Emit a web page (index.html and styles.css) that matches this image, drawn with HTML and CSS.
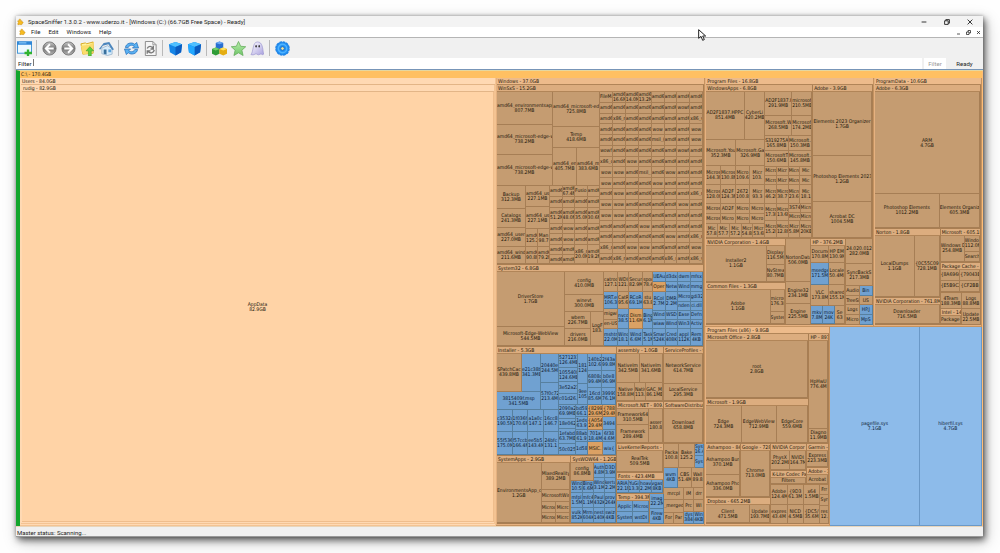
FILE: index.html
```html
<!DOCTYPE html>
<html lang="en">
<head>
<meta charset="utf-8">
<title>SpaceSniffer</title>
<link rel="stylesheet" href="styles.css">
</head>
<body>
<svg class="defs" aria-hidden="true">
  <defs>
    <linearGradient id="grey" x1="0" y1="0" x2="0" y2="1"><stop offset="0" stop-color="#c9c9c9"/><stop offset=".5" stop-color="#777"/><stop offset="1" stop-color="#b5b5b5"/></linearGradient>
    <linearGradient id="green" x1="0" y1="0" x2="0" y2="1"><stop offset="0" stop-color="#b9efac"/><stop offset="1" stop-color="#6fc468"/></linearGradient>
    <linearGradient id="ghost" x1="0" y1="0" x2="1" y2="1"><stop offset="0" stop-color="#fff"/><stop offset="1" stop-color="#aaa2df"/></linearGradient>
    <g id="puzzle"><path d="M2 5h3c-1-2 0-4 1.500-4s2.500 2 1.500 4h3v3c2-1 3 0 3 1.500S12 12 11 11v3H7.500c.500-2-2.500-2-2 0H2v-3.500c2 0 2-2.500 0-2.500z" fill="#f8bd20" stroke="#c98a12"/></g>
    <g id="box"><path d="M1 3.500 8 1l7 2.500-1 8.500-6 3.500L2 12z" fill="#1585e6"/><path d="M1 3.500 8 1l7 2.500L8 6.500z" fill="#4fc0ff"/><path d="M8 6.500 15 3.500 14 12l-6 3.500z" fill="#0a5cc0"/></g>
  </defs>
</svg>
<main class="window">
  <header class="titlebar">
    <svg class="logo" viewBox="0 0 16 16"><use href="#puzzle"/></svg>
    <h1 class="title">SpaceSniffer 1.3.0.2 - www.uderzo.it - [Windows (C:) (66.7GB Free Space) - Ready]</h1>
    <div class="controls">
      <button aria-label="Minimize"><svg viewBox="0 0 10 10"><path d="M1 5h8"/></svg></button>
      <button aria-label="Restore"><svg viewBox="0 0 10 10"><path d="M1 3h6v6H1zM3 3V1h6v6H7"/></svg></button>
      <button aria-label="Close"><svg viewBox="0 0 10 10"><path d="m1 1 8 8M9 1 1 9"/></svg></button>
    </div>
  </header>
  <nav class="menubar">
    <svg class="logo" viewBox="0 0 16 16"><use href="#puzzle"/></svg>
    <button>File</button><button>Edit</button><button>Windows</button><button>Help</button>
    <div class="controls small">
      <button aria-label="Minimize view"><svg viewBox="0 0 10 10"><path d="M2 8h6"/></svg></button>
      <button aria-label="Restore view"><svg viewBox="0 0 10 10"><path d="M1 4h5v5H1zM4 4V1h5v5H6"/></svg></button>
      <button aria-label="Close view"><svg viewBox="0 0 10 10"><path d="m2 2 6 6M8 2 2 8"/></svg></button>
    </div>
  </nav>
  <div class="toolbar">
    <button aria-label="New view"><svg viewBox="0 0 16 16"><rect x=".5" y="1" width="15" height="12" fill="#eefaff" stroke="#3c91d4"/><path d="M0 .5h16v3.500H0z" fill="#2d86d8"/><path d="M2 2h8" stroke="#9ed7ff"/><path d="M10.500 9h2.500v2.500h3V14h-3v2h-2.500v-2H8v-2.500h2.500z" fill="#2fb32f"/></svg></button>
    <i class="sep"></i>
    <button aria-label="Back"><svg viewBox="0 0 16 16"><circle cx="8" cy="8" r="7" fill="url(#grey)" stroke="#777"/><path d="m8.500 3.500-4.500 4.500 4.500 4.500M4.500 8H12.500" fill="none" stroke="#fff" stroke-width="2"/></svg></button>
    <button aria-label="Forward"><svg viewBox="0 0 16 16"><circle cx="8" cy="8" r="7" fill="url(#grey)" stroke="#777"/><path d="m7.500 3.500 4.500 4.500-4.500 4.500M3.500 8h8" fill="none" stroke="#fff" stroke-width="2"/></svg></button>
    <button aria-label="Up one folder"><svg viewBox="0 0 16 16"><path d="m1 3 5-1 1 1 7-2v12l-11 1z" fill="#fff3a0" stroke="#d9a91e"/><path d="m1 5 9-1 5-3-2 12-10 1z" fill="#fbdc6c"/><path d="m10.500 6 4 4.500H12V16H9v-5.500H6.500z" fill="#5fd03c" stroke="#3a9b24" stroke-width=".6"/></svg></button>
    <button aria-label="Home"><svg viewBox="0 0 16 16"><path d="M3 7.500 9 5l5 3v6l-5 1.500-6-2z" fill="#d7ecfb" stroke="#7799bb" stroke-width=".6"/><path d="M0 8.500 5 2l6-1 5 8-2 .500-4-6-6 1.500-2.500 4z" fill="#4c86bd"/><path d="M5 9h3v5.500l-3-1z" fill="#376f9d"/><path d="M10 9h3v3h-3z" fill="#5ba3db"/></svg></button>
    <i class="sep"></i>
    <button aria-label="Refresh"><svg viewBox="0 0 16 16"><path d="M1.500 7C2 2.500 8 .5 11.500 3.500L13.500 1.500 15.500 7.500H9l2-2C8 3.500 5 5 4.500 7z" fill="#5bb2f3" stroke="#1764b2" stroke-width=".7"/><path d="M14.500 9C14 13.500 8 15.500 4.500 12.500L2.500 14.500.5 8.500H7l-2 2c3 2 6 .500 6.500-1.500z" fill="#5bb2f3" stroke="#1764b2" stroke-width=".7"/></svg></button>
    <button aria-label="Refresh view"><svg viewBox="0 0 16 16"><path d="M2.500.5h8l3.500 3.500v11.500H2.500z" fill="#f5f5f5" stroke="#888"/><path d="M10.500.5V4H14" fill="none" stroke="#999"/><path d="M4.500 8c1-3 5-3 6 0M12 9.500c-1 4-5 4-7 1M11 5v3.500H8M4.500 13.500v-3H8" fill="none" stroke="#777" stroke-width="1.400"/></svg></button>
    <i class="sep"></i>
    <button aria-label="Less detail"><svg viewBox="0 0 16 16"><use href="#box"/></svg></button>
    <button aria-label="More detail"><svg viewBox="0 0 16 16"><use href="#box"/><path d="M1 3.500l7 3v9L2 12z" fill="#22a8ff"/></svg></button>
    <i class="sep"></i>
    <button aria-label="Show unknown space"><svg viewBox="0 0 16 16"><path d="m4 2 4-1.500 4 1.500v5L8 9 4 7z" fill="#286fd1"/><path d="m4 2 4-1.500 4 1.500-4 1.500z" fill="#6da8f4"/><path d="m0 8.500 4-1.500 4 1.500v5L4 15.500l-4-2z" fill="#2f9c37"/><path d="m0 8.500 4-1.500 4 1.500L4 10z" fill="#72cf6b"/><path d="m8 8.500 4-1.500 4 1.500v5l-4 2-4-2z" fill="#e4ad12"/><path d="m8 8.500 4-1.500 4 1.500-4 1.500z" fill="#ffe25d"/></svg></button>
    <button aria-label="Tags"><svg viewBox="0 0 16 16"><path d="m8 .500 2.300 5.100 5.400.5-4.100 3.700 1.300 5.700L8 12.600l-4.900 2.900 1.300-5.700L.3 6.100l5.400-.5z" fill="url(#green)" stroke="#60aa58" stroke-width=".8"/></svg></button>
    <button aria-label="Hide free space"><svg viewBox="0 0 16 16"><path d="M1 14.500C4 11 2.500 1 8 1s5.500 7 6.500 13c-1.500 1.500-2-.5-3.500 0s-2 1.500-3.500 0-3 2-6.500.5z" fill="url(#ghost)" stroke="#8f87c9" stroke-width=".6"/><ellipse cx="6.500" cy="5.500" rx=".8" ry="1.300" fill="#333"/><ellipse cx="9.800" cy="5.500" rx=".8" ry="1.300" fill="#333"/></svg></button>
    <i class="sep"></i>
    <button aria-label="Configure"><svg viewBox="0 0 16 16"><circle cx="8" cy="8" r="7" fill="#2490f2" stroke="#1f84e6" stroke-width="1.500" stroke-dasharray="3 .66"/><circle cx="8" cy="8" r="4.500" fill="none" stroke="#4fb4ff" stroke-width="1.500"/><circle cx="8" cy="8" r="1.900" fill="#f7e5a0" stroke="#0e62b8" stroke-width=".8"/></svg></button>
  </div>
  <form class="filterbar">
    <label for="filter">Filter</label>
    <input id="filter" type="text" autocomplete="off">
    <button type="button">Filter</button>
    <output>Ready</output>
  </form>
  <section class="map" id="map"></section>
  <footer class="status">Master status: Scanning...</footer>
  <svg class="pointer" viewBox="0 0 12 18"><path d="M1 1v13l3.500-3 2.500 6 2.500-1.200L7 10.500h4.500z" fill="#fff" stroke="#222" stroke-width="1.500"/></svg>
</main>
<script src="map.js"></script>
</body>
</html>
```
FILE: styles.css
```css
* { box-sizing: border-box; }
body {
  margin: 0;
  min-height: 100vh;
  padding: 16px 17px 16px 16px;
  display: flex;
  background: #fefefe;
  color: #222;
  font: 6px/8px Roboto, "Noto Sans", sans-serif;
}
button { border: 0; padding: 0; background: none; color: inherit; font: inherit; }
svg { display: block; }
.defs { position: absolute; width: 0; height: 0; }
.window {
  position: relative;
  flex: 1;
  min-width: 0;
  display: flex;
  flex-direction: column;
  background: #f0f0f0;
  box-shadow: 0 0 3px rgba(0, 0, 0, .25), 2px 3px 7px rgba(0, 0, 0, .6), 3px 5px 16px rgba(0, 0, 0, .2);
}
.titlebar, .menubar { display: flex; align-items: center; padding-left: 1px; }
.titlebar { height: 11px; background: #f3f3f3; }
.logo { width: 7px; height: 8px; margin-right: 4px; }
.title { margin: 0; font-size: 6px; font-weight: 400; }
.controls { display: flex; gap: 17px; margin-left: auto; padding-right: 10px; }
.controls svg { width: 6px; height: 6px; fill: none; stroke: #222; stroke-width: 1.5; }
.menubar { height: 11px; padding-left: 3px; background: #fff; border-bottom: 1px solid #b5b5b5; gap: 8px; }
.menubar .logo { margin-right: -3px; }
.controls.small { gap: 5px; padding-right: 2px; }
.controls.small svg { width: 5px; height: 5px; }
.toolbar { height: 20px; display: flex; align-items: center; gap: 4px; padding: 0 1px; }
.toolbar svg { width: 15px; height: 15px; }
.sep { width: 1px; height: 16px; margin-right: 1px; background: #b9b9b9; }
.filterbar { height: 12px; display: flex; background: #fff; border-bottom: 1px solid #7795b8; line-height: 11px; }
.filterbar label { padding: 0 1px 0 2px; }
.filterbar input { flex: 1; min-width: 0; border: 0; border-left: 1px solid #777; margin: 1px 0 3px 1px; padding: 0 2px; outline: 0; font: inherit; }
.filterbar button { width: 24px; border-left: 2px solid #f0f0f0; color: #999; }
.filterbar output { width: 37px; background: #f0f0f0; text-align: center; }
.map {
  flex: 1;
  min-height: 0;
  display: flex;
  border-left: 4px solid #12a52c;
  border-top: 1px solid #e5d7a0;
  background: #ffbe62;
  color: #24180c;
  font: 5px/5px "DejaVu Sans Condensed", "DejaVu Sans", sans-serif;
  white-space: nowrap;
}
.row, .col, .folder, .tile { min-width: 0; min-height: 0; flex-basis: 0; }
.row, .col, .folder { display: flex; }
.col, .folder { flex-direction: column; }
.cells { display: grid; min-width: 0; min-height: 0; flex-basis: 0; grid-auto-rows: minmax(0, 1fr); }
.folder { border: solid #a97e52; border-width: 0 1px 1px 0; background: #d6a678; overflow: hidden; }
.folder > .head { flex: none; height: 7px; padding: 0 1px; line-height: 6px; overflow: hidden; background: #dcad7f; border-bottom: 1px solid #b18558; }
.drive > .head { background: #ffc062; border: 0; }
.drive { border: 0; background: #ffbd77; padding-right: 1px; }
.area > .head { background: #edbb8b; }
.area, .light { background: #e5b180; border-color: #c59361; padding: 0 0 1px 1px; }
.light > .head { background: #ffd9b3; border-color: #e3b587; }
.light { background: #ffd9b3; border-color: #f4c392; }
.tile { display: flex; flex-direction: column; justify-content: center; overflow: hidden; text-align: center; background: #c59c71; border: solid #a67e55; border-width: 0 1px 1px 0; }
.tile span { flex: none; overflow: hidden; height: 5px; }
.pale { background: #ffd3a6; border-color: #efbd8c; }
.hot { background: #dba164; }
.blue { background: #70a1d1; border-color: #57809f; color: #0e2033; }
.free { background: #8dbbea; border-color: #6a98c7; color: #102438; }
.status { height: 11px; padding: 0 1px; line-height: 11px; border-top: 1px solid #e8d5bb; border-bottom: 1px solid #999; }
.pointer { position: absolute; left: 682px; top: 13px; width: 8px; height: 12px; }
```
FILE: map.js
```js
// Each builder takes the share of its parent first, then its content.
function box(cls, share, kids) {
  const el = document.createElement('div');
  el.className = cls;
  el.style.flexGrow = share;
  kids.forEach(k => el.appendChild(k));
  return el;
}
function line(text, cls) {
  const s = document.createElement(cls ? 'div' : 'span');
  if (cls) s.className = cls;
  s.textContent = text;
  return s;
}
const t = (n, text, kind = '') => box('tile ' + kind, n, text.split('|').map(s => line(s)));
const b = (n, text) => t(n, text, 'blue');
const r = (n, ...kids) => box('row', n, kids);
const c = (n, ...kids) => box('col', n, kids);
const f = (n, title, ...kids) => box('folder', n, [line(title, 'head'), ...kids]);
const area = (n, title, ...kids) => { const e = f(n, title, ...kids); e.classList.add('area'); return e; };
const light = (n, title, ...kids) => { const e = f(n, title, ...kids); e.classList.add('light'); return e; };
// A block of equal cells; a leading * marks a blue one, a leading ! a bright one.
function g(n, cols, list) {
  const kinds = { '*': 'blue', '!': 'hot' };
  const el = box('cells', n, list.trim().split(/\s+/).map(s => {
    const kind = kinds[s[0]];
    return t(1, kind ? s.slice(1) : s, kind);
  }));
  el.style.gridTemplateColumns = `repeat(${cols}, minmax(0, 1fr))`;
  return el;
}

const winSxS = f(181, 'WinSxS - 15.2GB', r(173,
  c(103,
    r(94,
      c(56, t(33, 'amd64_environmentsapp-|807.7MB'), t(30, 'amd64_microsoft-edge-we|738.2MB'), t(31, 'amd64_microsoft-edge-we|738.2MB')),
      c(47, t(35, 'amd64_microsoft-edge|725.8MB'), t(20, 'Temp|418.6MB'), r(39, t(24, 'amd64_en|405.7MB'), t(23, 'amd64_m|383.6MB')))),
    r(79,
      c(29, t(24, 'Backup|312.3MB'), t(19, 'Catalogs|241.3MB'), t(19, 'amd64_user|227.0MB'), t(17, 'amd64_wind|211.6MB')),
      c(24, t(21, 'amd64_us|227.1MB'), t(22, 'amd64_us|227.1MB'), g(36, 2, 'amd6|125.2 Man|98.7 amd6|90.8M amd6|79.2M')),
      c(50,
        g(22, 4, 'amd6 amd6|67.4M Fusio amd6 amd6 amd6 amd6 amd6'),
        g(16, 4, 'amd6|51.2M amd6|48.0M amd6|35.0M amd6|30.6M'),
        g(22, 4, 'amd6 wow amd6 amd6 amd6 wow amd6 amd6'),
        r(19, g(25, 2, 'amd6 amd6 amd6 amd6'), g(25, 2, 'x86_r|20.0M amd6|19.2M'))))),
  g(103, 8, `FileMa amd6|16.6M amd6|14.0M amd6|13.2M amd6 amd6 amd6 amd6
    amd6 amd6 amd6 amd6 amd6 amd6 wowf amd6
    amd6 x86_r amd6 amd6 amd6 amd6 amd6 x86_v
    amd6 amd6 amd6 amd6 wow amd6 amd6 wow
    amd6 amd6 amd6 amd6 msil_( amd6 amd6 wow
    wowf amd6 amd6 amd6 amd6 amd6 wowf amd6
    x86_d amd6 wow amd6 amd6 amd6 amd6 amd6
    wow wow amd6 msil_ amd6 wow amd6 amd6
    wow amd6 amd6 amd6 wow amd6 amd6 amd6
    amd6 wow amd6 amd6 amd6 amd6 amd6 x86_r
    wow wow amd6 amd6 amd6 amd6 wow amd6
    wow wow amd6 amd6 amd6 amd6 amd6 amd6
    amd6 amd6 amd6 wow amd6 amd6 amd6 amd6
    amd6 amd6 amd6 amd6 amd6 wow amd6 x86_r
    x86_r amd6 wow wow amd6 amd6 amd6 wow
    amd6 x86_r amd6 amd6 amd6 x86_r amd6 x86_v`)));

const system32 = f(81, 'System32 - 6.8GB', r(74,
  c(68, t(56, 'DriverStore|1.7GB'), t(18, 'Microsoft-Edge-WebView|544.5MB')),
  c(39, t(22, 'config|410.0MB'), t(17, 'winevt|300.0MB'),
    r(35, c(27, t(18, 'wbem|226.7MB'), t(17, 'drivers|216.0MB')), t(12, 'LogF|183.'))),
  c(14, t(20, 'catroo|127.1'), b(17, 'MRT.e|106.3'), t(11, 'migwi'), t(9, 'en-US'), b(17, 'mshtm|22.0M')),
  c(11, t(20, 'WDI|121.6'), t(17, 'CatR|95.6M'), b(20, 'nvco|38.5'), b(17, 'Wind|18.1M')),
  c(14, t(20, 'Secur|82.9M'), b(17, 'RCoR|69.1M'), t(20, 'Dism|11.6M', 'hot'), b(17, 'Wind|6.6M')),
  c(10, t(20, 'spoo|78.4'), t(17, 'stu|63.8'), b(20, 'Bing|6.1M'), b(17, 'Task|5.1M')),
  c(50, g(20, 4, '*UEAu *d3dx *dwm *mfsx !Oper *Netw *Wind *mmg'),
    r(19, g(25, 2, '*RCoI|2.7M *DMR|2.2M'), g(25, 2, '*Micro *gdi32 *nden *ci.dll')),
    g(18, 4, '*Wind *WSD *Ease *Defn *wiaw *Wind *Win3 *Activ'),
    g(17, 4, '*Smar|524K *Cred|408K *appl|112K *Rem|4KB'))));

const installer = f(110, 'Installer - 5.3GB', r(103,
  c(62,
    r(57,
      c(44, r(40, t(25, 'SPatchCac|439.8MB'), b(19, 'e21c38b|341.3MB')), b(17, '3815409f.msp|341.5MB')),
      c(18, b(30, '20440e|244.5M'), b(27, '57f0c72|213.4M'))),
    g(46, 4, '*c3532dc|190.5M *1f036f|170.6M *a1a0c|147.1 *16cc8|146.7 *55f5366|175.0M *f57ccba|166.4M *ee5b5|143.4M *24bfc|131.1')),
  c(57,
    r(52,
      c(19, b(15, '5271231|126.4MB'), b(14, '105540b|124.6MB'), b(12, '3e52a21f'), b(11, 'c01d26.n')),
      c(10, b(31, '181|124'), b(21, '9ee|105')),
      g(28, 2, '*140b2|102.6 *2f43a|99.8M *6808c|99.4M *b0e8|96.9M *16cd|85.6M *39990|76.1M')),
    r(51,
      c(17, b(14, '2090a2|69.9MB'), b(11, '18e062'), b(15, '1efabd|63.7MB'), b(11, '50c025f')),
      g(12, 1, '*bd59|66.1 *1eds|63.9 *88ab|61.9 *1d58'),
      g(15, 1, '!{8299|29.6M !{A054|29.4M *701a|18.4M !MSIC.'),
      g(13, 1, '!{788|29.4M *3494 *6f38|4.6M *wix{')))));

const systemApps = r(69,
  f(74, 'SystemApps - 2.9GB', r(62,
    t(44, 'EnvironmentsApp_c|1.2GB'),
    c(29, t(28, 'MixedReality|389.2MB'), t(12, 'MicrosoftWin'), g(22, 2, 'Microc Micrc Microc Micrc')))),
  f(45, 'SysWOW64 - 1.2GB',
    r(31, c(22, t(18, 'config|86.8MB'), g(13, 2, '*Wind|10.5M *Bing|6.6M')),
      g(22, 2, '*Auth|4.8M *D3D|3.9M *Wind|3.1M *kertu|2.2M')),
    g(31, 4, '*mfpl|1.5M *mfc4|1.1M *Paul|432K *prov|264K *vulk|852K *Mrm|604K *nest|140K *swiz|4KB')));

const windows = area(208, 'Windows - 37.0GB', winSxS, system32, r(179,
  c(120, installer, systemApps),
  c(87,
    r(56,
      f(47, 'assembly - 1.0GB', r(31, t(23, 'NativeIm|342.5MB'), t(24, 'NativeIm|341.6MB')), r(19, t(18, 'Native|158.8M'), t(11, 'Nativ|113.2'), t(17, 'GAC_M|86.1MB'))),
      f(40, 'ServiceProfiles - 9', t(32, 'NetworkService|614.7MB'), t(18, 'LocalService|295.3MB'))),
    r(42,
      f(47, 'Microsoft.NET - 809.2', r(35, c(33, t(17, 'Framework64|310.5MB'), t(18, 'Framework|289.4MB')), t(13, 'asser|180.8'))),
      f(40, 'SoftwareDistributio', t(35, 'Download|658.8MB'))),
    r(81,
      c(47,
        f(29, 'LiveKernelReports - 5', t(22, 'RealTek|509.5MB')),
        f(21, 'Fonts - 423.4MB', g(14, 4, '*ARIA|22.1M *YuGi|13.3M *hoav|2.2M *vgas|8KB')),
        r(31, f(33, 'Temp - 394.3M', g(23, 2, '*Applic *Micros *System *wstDI')), g(14, 1, '*imag|22.2M *Firew|4KB'))),
      c(40,
        r(24, t(15, 'Packa|100.8'), t(15, 'Bake|125.2'), g(10, 1, '*Sys|16.4 *Sys')),
        r(20, b(14, 'wvm|4KB'), t(14, 'CBS|51.4M'), t(12, 'Wall|89.8')),
        r(36, c(20, t(12, 'mrcpl'), t(12, '_merged'), g(12, 2, 'For Par')),
          g(20, 2, 'IM drr Prc WI *dys|384 *Win|4KB')))))));

const windowsApps = f(108, 'WindowsApps - 6.8GB', r(147,
  c(59, r(48, t(39, 'AD2F1837.HPPC|851.4MB'), t(20, 'CyberLi|420.2MB')),
    r(27, t(30, 'Microsoft.You|352.3MB'), t(29, 'Microsoft.Ga|326.9MB')),
    g(38, 4, 'Micros|144.3M Micros|130.8M Micro|109.6 Micr|103. Micros|128.0M AD2F|124.3M 2672|100.8 Micr|93.3'),
    g(20, 4, 'Micros AD2F Micro Micro Micros Micro Micro Micro'),
    g(14, 5, 'Mic|57.8 Mic|57.7 Mic|57.2 Micr|54.8M Micr|53.6M')),
  c(47, r(44, c(27, t(24, 'AD2F1837.H|291.9MB'), t(20, 'Microsoft.Wi|268.5MB')), c(20, t(24, 'microsof|210.5MB'), t(20, 'Microsof|174.2MB'))),
    g(31, 2, 'S319275A.|165.8MB Microsoft.|150.3MB MicrosoftT|150.6MB Microsoft.|145.8MB'),
    g(19, 4, 'Micros Micr Micros Mic Micros Micr Micros Mic'),
    g(19, 4, 'Micros|46.2MB Micro|38.7 Micros|23.6M Mic|18.1'),
    r(17, g(26, 2, 'Micros|17.3M Micros|13.6M'), g(25, 2, '3S74E Micro Micros Micro')),
    g(17, 4, 'Micros|15.2M Micro|12.8M Micr|5.8MB Micro|20KB'))));

const programFiles = area(170, 'Program Files - 16.8GB',
  r(154, windowsApps,
    f(60, 'Adobe - 3.9GB', t(65, 'Elements 2023 Organizer|1.7GB'), t(46, 'Photoshop Elements 2023|1.2GB'), t(36, 'Acrobat DC|1004.5MB'))),
  r(86,
    c(80,
      f(44, 'NVIDIA Corporation - 1.4GB', r(37, t(60, 'Installer2|1.1GB'), c(18, t(20, 'Display|116.5M'), t(17, 'NvStrea|80.7MB')))),
      f(42, 'Common Files - 1.3GB', r(35, t(63, 'Adobe|1.1GB'), c(14, t(23, 'micros|176.3M'), t(12, 'System'))))),
    c(26, t(44, 'NortonData|506.0MB'), t(21, 'Engine32|234.1MB'), t(21, 'Engine|225.5MB')),
    f(34, 'HP - 376.2MB',
      r(17, t(18, 'Docume|170.8MB'), t(16, 'HP EM|130.9M')),
      r(22, b(18, 'msedge|171.5M'), t(16, 'Locale|50.4MB')),
      r(22, t(18, 'VLC|173.8M'), t(16, 'shared|155.1M')),
      r(18, b(12, 'mkv|7.8M'), b(12, 'mov|24K'), t(10, 'Se|63'))),
    c(27, t(25, '24.020.012|282.0MB'), t(21, 'SyncBackS|217.3MB'), g(40, 2, 'Audio *Bin TreeSi US Logs *HP.J Micro *MpS'))));

const programData = area(108, 'ProgramData - 10.6GB',
  f(144, 'Adobe - 6.3GB', t(102, 'ARM|4.7GB'), r(34, t(65, 'Photoshop Elements|1012.2MB'), t(40, 'Elements Organiz|605.3MB'))),
  r(97,
    c(65,
      f(70, 'Norton - 1.8GB', r(62, t(40, 'LocalDumps|1.1GB'), t(24, '{0C55C09|728.1MB'))),
      f(27, 'NVIDIA Corporation - 761.8M', t(20, 'Downloader|716.5MB'))),
    c(40,
      f(34, 'Microsoft - 605.1M', r(26, t(24, 'Windows D|254.8MB'), c(16, t(16, 'Windo|112.0M'), t(10, 'Search')))),
      f(30, 'Package Cache - 4', g(22, 2, '{8A696C {79043B {E5B9C2 {CF2BB')),
      r(33, c(21, t(17, '4Team|188.3MB'), f(16, 'Intel - 147', t(8, 'Package'))), c(19, t(17, 'Logs|88.8MB'), t(16, 'Update|22.5MB'))))));

const x86 = area(125, 'Program Files (x86) - 9.8GB',
  r(117,
    c(104, f(65, 'Microsoft Office - 2.8GB', t(58, 'root|2.8GB')),
      f(45, 'Microsoft - 1.9GB', r(38, t(36, 'Edge|724.3MB'), t(36, 'EdgeWebView|712.9MB'), t(32, 'EdgeCore|559.6MB')))),
    f(19, 'HP - 897', t(90, 'HpHwU|776.4M'), t(13, 'Diagno|11.9MB'))),
  r(86,
    c(65,
      r(56, f(35, 'Ashampoo - 846', t(26, 'Ashampoo Bur|370.1MB'), t(23, 'Ashampoo Phc|336.0MB')), f(30, 'Google - 728.', t(49, 'Chrome|713.0MB'))),
      f(25, 'Dropbox - 665.2MB', r(18, t(45, 'Client|471.5MB'), t(20, 'Update|193.7MB')))),
    c(58,
      r(42,
        c(36, f(28, 'NVIDIA Corpor', r(21, t(19, 'PhysX|202.2MB'), t(17, 'NVIDI|164.7M'))), f(14, 'K-Lite Codec Pac', t(7, 'Filters'))),
        c(22, f(25, 'Garmin -', t(18, 'Express|223.3MB')), f(17, 'Adobe - 1', t(9, 'Acrobat')))),
      r(39,
        g(49, 3, 'Adobe|124.4M {9D3|61.3M x64|1.5MB expres|43.4M NICD|4.5MB {DC5/|35.6M'),
        c(9, t(10, 'Frr'), t(10, 'Syr'), t(19, 'res|12.'))))));

const drive = f(1, 'C:\\ - 170.4GB', r(448,
  light(476, 'Users - 84.0GB', light(441, 'rudig - 82.9GB', t(435, 'AppData|82.9GB', 'pale'))),
  windows,
  c(278,
    r(249, programFiles, programData),
    r(199, x86, t(90, 'pagefile.sys|7.1GB', 'free'), t(62, 'hiberfil.sys|4.7GB', 'free')))));
drive.classList.add('drive');
document.getElementById('map').appendChild(drive);
```
